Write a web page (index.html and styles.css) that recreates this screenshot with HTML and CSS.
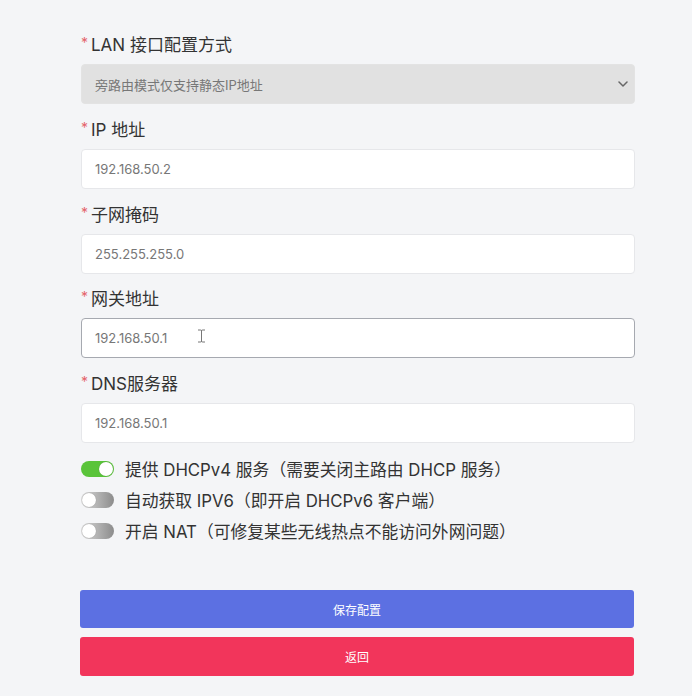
FILE: index.html
```html
<!DOCTYPE html>
<html lang="zh-CN">
<head>
<meta charset="utf-8">
<link rel="stylesheet" href="styles.css">
</head>
<body>
<form class="form">
  <div class="field">
    <label class="label"><span class="req">*</span>LAN 接口配置方式</label>
    <div class="select">
      <span>旁路由模式仅支持静态IP地址</span>
      <svg class="chev" width="10" height="6" viewBox="0 0 10 6"><path d="M1 1l4 4 4-4" fill="none" stroke="#666" stroke-width="1.5" stroke-linecap="round" stroke-linejoin="round"/></svg>
    </div>
  </div>
  <div class="field">
    <label class="label"><span class="req">*</span>IP 地址</label>
    <input class="input" type="text" value="192.168.50.2">
  </div>
  <div class="field">
    <label class="label"><span class="req">*</span>子网掩码</label>
    <input class="input" type="text" value="255.255.255.0">
  </div>
  <div class="field">
    <label class="label"><span class="req">*</span>网关地址</label>
    <div class="input-wrap">
      <input class="input focused" type="text" value="192.168.50.1">
      <svg class="ibeam" width="9" height="14" viewBox="0 0 9 14"><path d="M1 1h2.5M5.5 1H8M4.5 1.5v11M1 13h2.5M5.5 13H8M3.5 1q1 0 1 1M5.5 1q-1 0-1 1M3.5 13q1 0 1-1M5.5 13q-1 0-1-1" fill="none" stroke="#777" stroke-width="1"/></svg>
    </div>
  </div>
  <div class="field">
    <label class="label"><span class="req">*</span>DNS服务器</label>
    <input class="input" type="text" value="192.168.50.1">
  </div>

  <div class="switches">
    <div class="switch-row"><span class="switch on"><span class="knob"></span></span><span>提供 DHCPv4 服务（需要关闭主路由 DHCP 服务）</span></div>
    <div class="switch-row"><span class="switch"><span class="knob"></span></span><span>自动获取 IPV6（即开启 DHCPv6 客户端）</span></div>
    <div class="switch-row"><span class="switch"><span class="knob"></span></span><span>开启 NAT（可修复某些无线热点不能访问外网问题）</span></div>
  </div>

  <div class="actions">
    <button type="button" class="btn save">保存配置</button>
    <button type="button" class="btn back">返回</button>
  </div>
</form>
</body>
</html>
```

FILE: styles.css
```css
* { box-sizing: border-box; }
html, body { margin: 0; padding: 0; }
body {
  background: #f4f5f7;
  font-family: "Inter", "Noto Sans CJK SC", "Noto Sans", sans-serif;
  color: #333;
  width: 692px;
  height: 696px;
  overflow: hidden;
}
.form {
  width: 554px;
  margin-left: 81px;
  padding-top: 33px;
  display: flex;
  flex-direction: column;
}
.field {
  display: flex;
  flex-direction: column;
}
.field + .field { margin-top: 13.75px; }
.label {
  font-size: 17px;
  line-height: 24px;
  color: #333;
  margin-bottom: 7px;
  display: flex;
  align-items: center;
}
.req {
  color: #e4636b;
  font-size: 14px;
  width: 10px;
  margin-top: -4px;
}
.select {
  height: 40px;
  background: #e1e1e1;
  border: 1px solid #e3e3e3;
  border-radius: 4px;
  display: flex;
  align-items: center;
  justify-content: space-between;
  padding: 0 5px 0 13px;
  font-size: 13px;
  color: #777;
}
.chev { margin-right: 1px; }
.input-wrap { position: relative; }
.input {
  width: 100%;
  height: 40px;
  background: #fff;
  border: 1px solid #e6e7ea;
  border-radius: 4px;
  padding: 0 13px;
  font-family: "Inter", "Noto Sans CJK SC", sans-serif;
  font-size: 13px;
  color: #777;
  outline: none;
}
.input.focused { border-color: #a6a9b0; }
.ibeam {
  position: absolute;
  left: 116px;
  top: 11px;
}
.switches {
  margin-top: 10.5px;
  display: flex;
  flex-direction: column;
}
.switch-row {
  display: flex;
  align-items: center;
  gap: 11px;
  height: 31px;
  font-size: 16.8px;
  color: #333;
}
.switch {
  width: 33px;
  height: 16px;
  border-radius: 8px;
  background: linear-gradient(90deg, #d9d9d9, #8c8c8c);
  display: flex;
  align-items: center;
  padding: 0 1px;
  flex: none;
}
.switch.on {
  background: #5ac43a;
  justify-content: flex-end;
}
.knob {
  width: 14px;
  height: 14px;
  border-radius: 50%;
  background: #fff;
  box-shadow: 0 0 1px rgba(0,0,0,.3);
}
.actions {
  margin-top: 43.5px;
  margin-left: -1px;
  width: 554px;
  display: flex;
  flex-direction: column;
  gap: 9px;
}
.btn {
  height: 38px;
  border: none;
  border-radius: 3px;
  color: #fff;
  font-family: "Noto Sans CJK SC", sans-serif;
  font-size: 12px;
  cursor: pointer;
}
.btn.save { background: #5c70e2; }
.btn.back { background: #f2355b; height: 39px; }
```
